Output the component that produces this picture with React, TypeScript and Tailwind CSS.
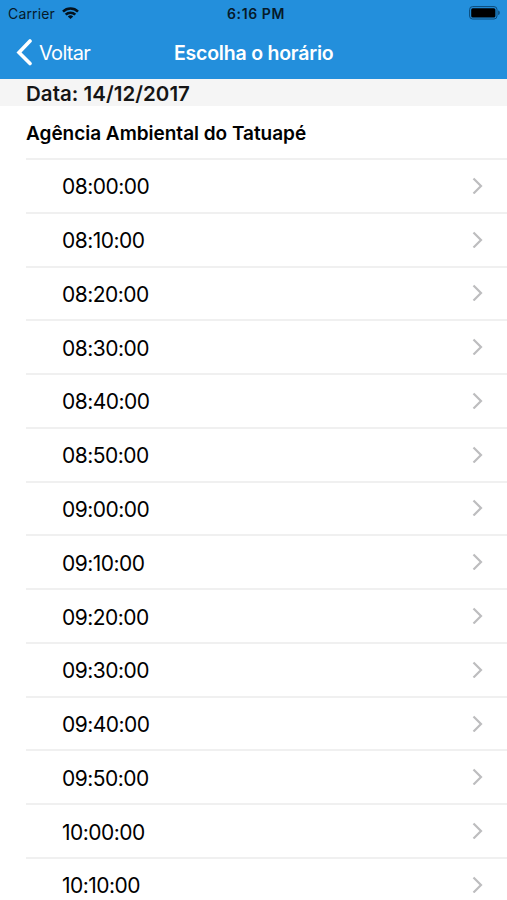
import React from "react";

const times = [
  "08:00:00", "08:10:00", "08:20:00", "08:30:00", "08:40:00", "08:50:00", "09:00:00",
  "09:10:00", "09:20:00", "09:30:00", "09:40:00", "09:50:00", "10:00:00", "10:10:00",
];

function StatusBar() {
  return (
    <div className="relative flex h-[27px] items-center justify-between pl-2 pr-[6px] text-[#061a2a]">
      <div className="flex items-center gap-[7px]">
        <span className="text-[14px] leading-[27px] tracking-[0.15px]">Carrier</span>
        <svg className="-mt-px" width="17" height="12" viewBox="0 0 17 12" fill="none" stroke="#04121d" strokeWidth="2.6">
          <path d="M1 4.6a10.8 10.8 0 0 1 15 0" />
          <path d="M3.7 7.7a6.8 6.8 0 0 1 9.6 0" />
          <path d="M8.5 12 5.8 9.5a3.8 3.8 0 0 1 5.4 0z" fill="#04121d" stroke="none" />
        </svg>
      </div>
      <span className="absolute inset-x-0 pl-[5px] text-center text-[14px] font-semibold leading-[27px] tracking-[0.6px]">6:16 PM</span>
      <svg className="-mt-px" width="32" height="14" viewBox="0 0 32 14">
        <rect x="0.6" y="0.6" width="27.4" height="12.4" rx="3" fill="none" stroke="#0c4a78" />
        <rect x="2.2" y="2.2" width="24.2" height="9.4" rx="1.5" fill="#000" />
        <path d="M29.3 4.5c1.8.5 1.8 4.1 0 4.6z" fill="#0c3c60" />
      </svg>
    </div>
  );
}

export default function App() {
  return (
    <div className="h-[900px] w-full overflow-hidden bg-white font-['Inter',sans-serif] text-black">
      <header className="h-[79px] bg-[#238fdc]">
        <StatusBar />
        <div className="grid h-[52px] grid-cols-[158px_1fr] items-center pl-4 text-white">
          <div className="flex items-center">
            <svg className="-mt-0.5" width="17" height="28" viewBox="0 0 17 28" fill="none" stroke="white" strokeWidth="3.6" strokeLinecap="round">
              <path d="M14 3 3 14.5l11 11" />
            </svg>
            <span className="ml-[6px] text-[20px] tracking-[-0.7px]">Voltar</span>
          </div>
          <h1 className="text-[19.5px] font-semibold leading-[30px] tracking-[-0.22px]">Escolha o horário</h1>
        </div>
      </header>
      <div className="h-[27px] bg-[#f5f5f5] pl-[26px] text-[20.5px] font-semibold leading-[29px] tracking-[0.03px] text-[#151515]">Data: 14/12/2017</div>
      <div className="ml-[26px] h-[54px] border-b-2 border-[#f0f0f0] text-[19px] font-semibold leading-[55px] tracking-[-0.02px]">Agência Ambiental do Tatuapé</div>
      <ul>
        {times.map((t) => (
          <li key={t} className="ml-[26px] flex h-[53.77px] items-center justify-between border-b-2 border-[#f0f0f0] pl-9 pr-6">
            <span className="pt-[2.5px] text-[21px] tracking-[-0.52px]">{t}</span>
            <svg className="-mt-px" width="11" height="17" viewBox="0 0 11 17" fill="none" stroke="#bdbdbf" strokeWidth="2.2">
              <path d="m1.5 1.5 7.5 7.5-7.5 7.5" />
            </svg>
          </li>
        ))}
      </ul>
    </div>
  );
}
